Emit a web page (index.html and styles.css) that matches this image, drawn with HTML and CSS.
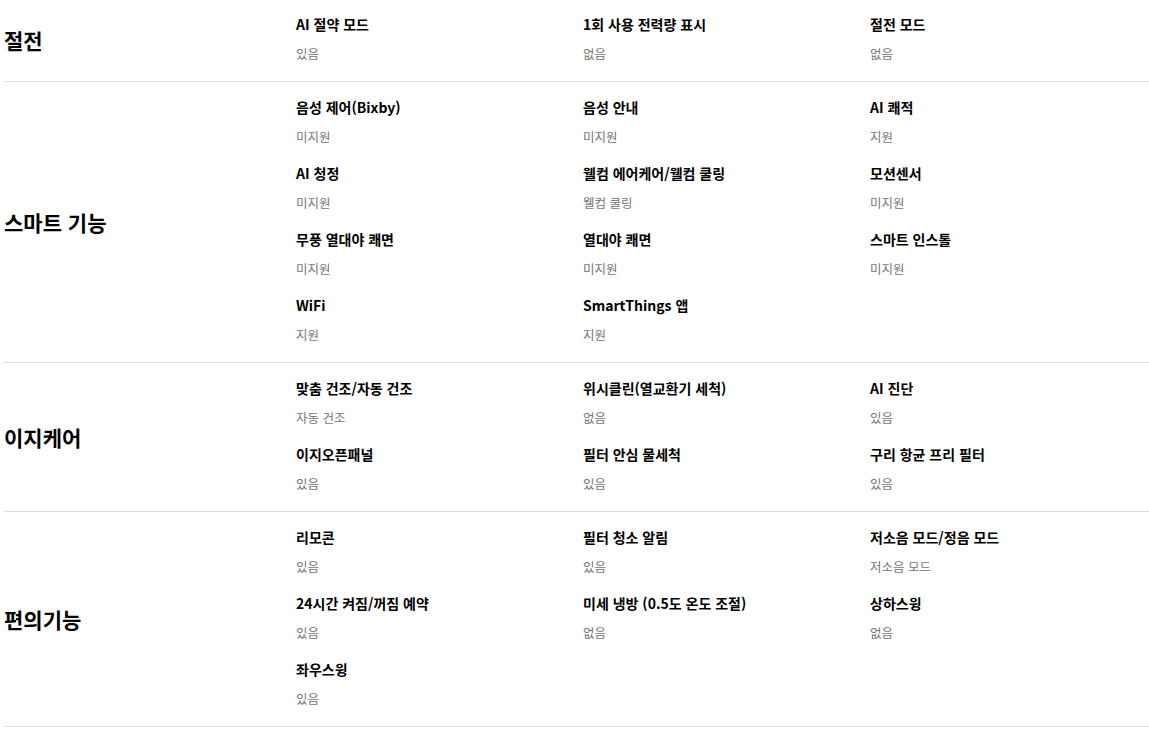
FILE: index.html
```html
<!DOCTYPE html>
<html lang="ko">
<head>
<meta charset="utf-8">
<link rel="stylesheet" href="styles.css">
</head>
<body>
<div class="spec">
  <section class="group">
    <h2 class="group-title">절전</h2>
    <div class="items">
      <div class="item"><div class="name">AI 절약 모드</div><div class="value">있음</div></div>
      <div class="item"><div class="name">1회 사용 전력량 표시</div><div class="value">없음</div></div>
      <div class="item"><div class="name">절전 모드</div><div class="value">없음</div></div>
    </div>
  </section>
  <section class="group">
    <h2 class="group-title">스마트 기능</h2>
    <div class="items">
      <div class="item"><div class="name">음성 제어(Bixby)</div><div class="value">미지원</div></div>
      <div class="item"><div class="name">음성 안내</div><div class="value">미지원</div></div>
      <div class="item"><div class="name">AI 쾌적</div><div class="value">지원</div></div>
      <div class="item"><div class="name">AI 청정</div><div class="value">미지원</div></div>
      <div class="item"><div class="name">웰컴 에어케어/웰컴 쿨링</div><div class="value">웰컴 쿨링</div></div>
      <div class="item"><div class="name">모션센서</div><div class="value">미지원</div></div>
      <div class="item"><div class="name">무풍 열대야 쾌면</div><div class="value">미지원</div></div>
      <div class="item"><div class="name">열대야 쾌면</div><div class="value">미지원</div></div>
      <div class="item"><div class="name">스마트 인스톨</div><div class="value">미지원</div></div>
      <div class="item"><div class="name">WiFi</div><div class="value">지원</div></div>
      <div class="item"><div class="name">SmartThings 앱</div><div class="value">지원</div></div>
    </div>
  </section>
  <section class="group">
    <h2 class="group-title">이지케어</h2>
    <div class="items">
      <div class="item"><div class="name">맞춤 건조/자동 건조</div><div class="value">자동 건조</div></div>
      <div class="item"><div class="name">위시클린(열교환기 세척)</div><div class="value">없음</div></div>
      <div class="item"><div class="name">AI 진단</div><div class="value">있음</div></div>
      <div class="item"><div class="name">이지오픈패널</div><div class="value">있음</div></div>
      <div class="item"><div class="name">필터 안심 물세척</div><div class="value">있음</div></div>
      <div class="item"><div class="name">구리 항균 프리 필터</div><div class="value">있음</div></div>
    </div>
  </section>
  <section class="group">
    <h2 class="group-title">편의기능</h2>
    <div class="items">
      <div class="item"><div class="name">리모콘</div><div class="value">있음</div></div>
      <div class="item"><div class="name">필터 청소 알림</div><div class="value">있음</div></div>
      <div class="item"><div class="name">저소음 모드/정음 모드</div><div class="value">저소음 모드</div></div>
      <div class="item"><div class="name">24시간 켜짐/꺼짐 예약</div><div class="value">있음</div></div>
      <div class="item"><div class="name">미세 냉방 (0.5도 온도 조절)</div><div class="value">없음</div></div>
      <div class="item"><div class="name">상하스윙</div><div class="value">없음</div></div>
      <div class="item"><div class="name">좌우스윙</div><div class="value">있음</div></div>
    </div>
  </section>
</div>
</body>
</html>
```

FILE: styles.css
```css
html, body {
  margin: 0;
  padding: 0;
  background: #fff;
}
body {
  font-family: "Noto Sans CJK KR", "Noto Sans", sans-serif;
  color: #000;
  overflow: hidden;
}
.spec {
  margin-left: 4px;
  width: 1145px;
}
.group {
  display: flex;
  align-items: center;
  border-bottom: 1px solid #dddddd;
  padding: 14px 0 16px;
}
.group:first-child {
  padding-top: 13px;
}
.group-title {
  width: 292px;
  flex: none;
  margin: 0;
  padding-top: 2px;
  font-size: 21px;
  font-weight: 700;
  line-height: 28px;
}
.items {
  flex: 1;
  display: grid;
  grid-template-columns: 287px 287px 1fr;
  row-gap: 14px;
}
.item {
  display: flex;
  flex-direction: column;
}
.name {
  font-size: 14px;
  font-weight: 700;
  line-height: 22px;
  height: 22px;
  white-space: nowrap;
}
.value {
  margin-top: 8px;
  font-size: 12.5px;
  line-height: 22px;
  height: 22px;
  color: #757575;
}
```
